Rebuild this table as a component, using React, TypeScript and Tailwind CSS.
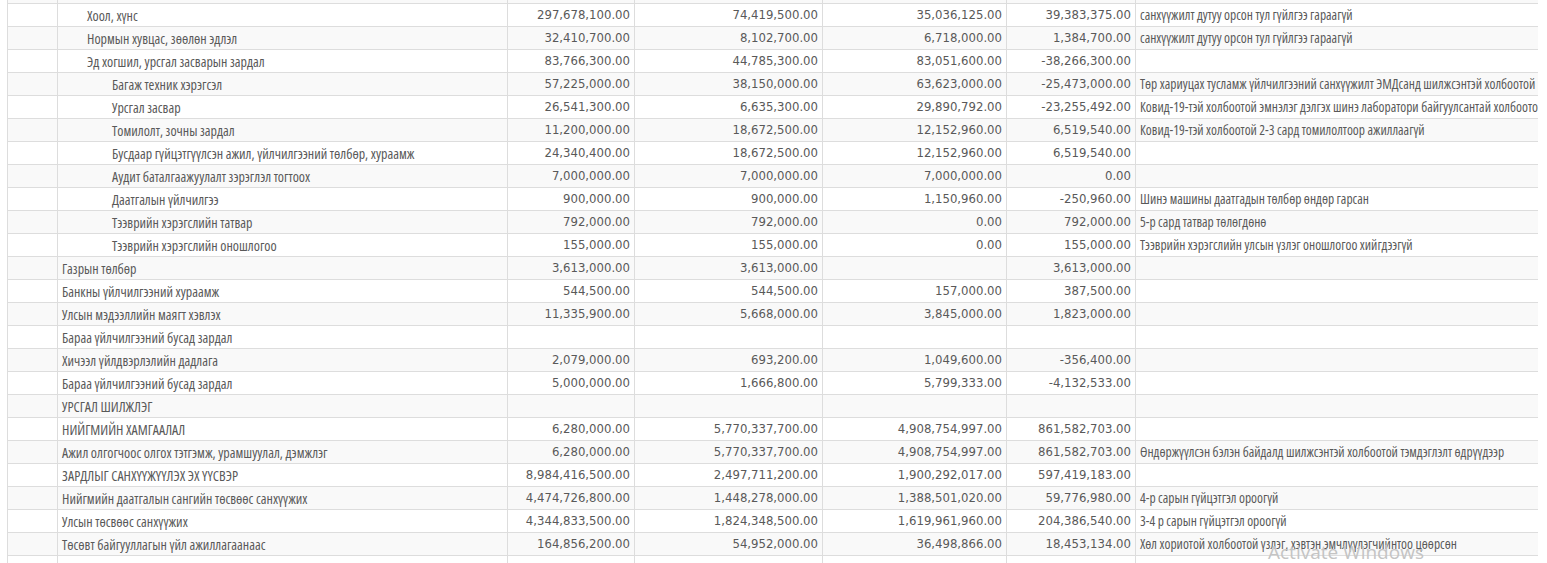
type Row = {
  label: string;
  level?: number;
  plan?: string;
  period?: string;
  actual?: string;
  diff?: string;
  note?: string;
};

const rows: Row[] = [
  { label: "" },
  { label: "Хоол, хүнс", level: 1, plan: "297,678,100.00", period: "74,419,500.00", actual: "35,036,125.00", diff: "39,383,375.00", note: "санхүүжилт дутуу орсон тул гүйлгээ гараагүй" },
  { label: "Нормын хувцас, зөөлөн эдлэл", level: 1, plan: "32,410,700.00", period: "8,102,700.00", actual: "6,718,000.00", diff: "1,384,700.00", note: "санхүүжилт дутуу орсон тул гүйлгээ гараагүй" },
  { label: "Эд хогшил, урсгал засварын зардал", level: 1, plan: "83,766,300.00", period: "44,785,300.00", actual: "83,051,600.00", diff: "-38,266,300.00" },
  { label: "Багаж техник хэрэгсэл", level: 2, plan: "57,225,000.00", period: "38,150,000.00", actual: "63,623,000.00", diff: "-25,473,000.00", note: "Төр хариуцах тусламж үйлчилгээний санхүүжилт ЭМДсанд шилжсэнтэй холбоотой" },
  { label: "Урсгал засвар", level: 2, plan: "26,541,300.00", period: "6,635,300.00", actual: "29,890,792.00", diff: "-23,255,492.00", note: "Ковид-19-тэй холбоотой эмнэлэг дэлгэх шинэ лаборатори байгуулсантай холбоотой" },
  { label: "Томилолт, зочны зардал", level: 2, plan: "11,200,000.00", period: "18,672,500.00", actual: "12,152,960.00", diff: "6,519,540.00", note: "Ковид-19-тэй холбоотой 2-3 сард томилолтоор ажиллаагүй" },
  { label: "Бусдаар гүйцэтгүүлсэн ажил, үйлчилгээний төлбөр, хураамж", level: 2, plan: "24,340,400.00", period: "18,672,500.00", actual: "12,152,960.00", diff: "6,519,540.00" },
  { label: "Аудит баталгаажуулалт зэрэглэл тогтоох", level: 2, plan: "7,000,000.00", period: "7,000,000.00", actual: "7,000,000.00", diff: "0.00" },
  { label: "Даатгалын үйлчилгээ", level: 2, plan: "900,000.00", period: "900,000.00", actual: "1,150,960.00", diff: "-250,960.00", note: "Шинэ машины даатгадын төлбөр өндөр гарсан" },
  { label: "Тээврийн хэрэгслийн татвар", level: 2, plan: "792,000.00", period: "792,000.00", actual: "0.00", diff: "792,000.00", note: "5-р сард татвар төлөгдөнө" },
  { label: "Тээврийн хэрэгслийн оношлогоо", level: 2, plan: "155,000.00", period: "155,000.00", actual: "0.00", diff: "155,000.00", note: "Тээврийн хэрэгслийн улсын үзлэг оношлогоо хийгдээгүй" },
  { label: "Газрын төлбөр", plan: "3,613,000.00", period: "3,613,000.00", diff: "3,613,000.00" },
  { label: "Банкны үйлчилгээний хураамж", plan: "544,500.00", period: "544,500.00", actual: "157,000.00", diff: "387,500.00" },
  { label: "Улсын мэдээллийн маягт хэвлэх", plan: "11,335,900.00", period: "5,668,000.00", actual: "3,845,000.00", diff: "1,823,000.00" },
  { label: "Бараа үйлчилгээний бусад зардал" },
  { label: "Хичээл үйлдвэрлэлийн дадлага", plan: "2,079,000.00", period: "693,200.00", actual: "1,049,600.00", diff: "-356,400.00" },
  { label: "Бараа үйлчилгээний бусад зардал", plan: "5,000,000.00", period: "1,666,800.00", actual: "5,799,333.00", diff: "-4,132,533.00" },
  { label: "УРСГАЛ ШИЛЖЛЭГ" },
  { label: "НИЙГМИЙН ХАМГААЛАЛ", plan: "6,280,000.00", period: "5,770,337,700.00", actual: "4,908,754,997.00", diff: "861,582,703.00" },
  { label: "Ажил олгогчоос олгох тэтгэмж, урамшуулал, дэмжлэг", plan: "6,280,000.00", period: "5,770,337,700.00", actual: "4,908,754,997.00", diff: "861,582,703.00", note: "Өндөржүүлсэн бэлэн байдалд шилжсэнтэй холбоотой тэмдэглэлт өдрүүдээр" },
  { label: "ЗАРДЛЫГ САНХҮҮЖҮҮЛЭХ ЭХ ҮҮСВЭР", plan: "8,984,416,500.00", period: "2,497,711,200.00", actual: "1,900,292,017.00", diff: "597,419,183.00" },
  { label: "Нийгмийн даатгалын сангийн төсвөөс санхүүжих", plan: "4,474,726,800.00", period: "1,448,278,000.00", actual: "1,388,501,020.00", diff: "59,776,980.00", note: "4-р сарын гүйцэтгэл ороогүй" },
  { label: "Улсын төсвөөс санхүүжих", plan: "4,344,833,500.00", period: "1,824,348,500.00", actual: "1,619,961,960.00", diff: "204,386,540.00", note: "3-4 р сарын гүйцэтгэл ороогүй" },
  { label: "Төсөвт байгууллагын үйл ажиллагаанаас", plan: "164,856,200.00", period: "54,952,000.00", actual: "36,498,866.00", diff: "18,453,134.00", note: "Хөл хориотой холбоотой үзлэг, хэвтэн эмчлүүлэгчийнтоо цөөрсөн" },
  { label: "" },
];

const indent = ["pl-1", "pl-[29px]", "pl-[54px]"];

// numbers read wider in the source font, DejaVu condensed digits match them best
const num = "border border-[#dddddd] px-1 py-0 text-right text-[13px] whitespace-nowrap font-stretch-normal font-['DejaVu_Sans_Condensed',sans-serif]";

export default function App() {
  return (
    <div
      className="relative h-[563px] w-[1547px] overflow-hidden bg-white text-[13.5px] text-[#595959] font-stretch-[75%]"
      style={{ fontFamily: '"Open Sans", "DejaVu Sans Condensed", sans-serif' }}
    >
      <div className="ml-[7px] w-[1531px] overflow-hidden">
        <table className="-mt-[20px] w-[1760px] table-fixed border-collapse">
          <colgroup>
            <col className="w-[50px]" />
            <col className="w-[450px]" />
            <col className="w-[127px]" />
            <col className="w-[188px]" />
            <col className="w-[184px]" />
            <col className="w-[129px]" />
            <col className="w-[632px]" />
          </colgroup>
          <tbody>
            {rows.map((r, i) => (
              <tr key={i} className={`h-[23px] ${i % 2 === 0 ? "bg-[#f9f9f9]" : "bg-white"}`}>
                <td className="border border-[#dddddd] p-0" />
                <td className={`border border-[#dddddd] py-0 pr-1 text-[14px] whitespace-nowrap ${indent[r.level ?? 0]}`}>{r.label}</td>
                <td className={num}>{r.plan}</td>
                <td className={num}>{r.period}</td>
                <td className={num}>{r.actual}</td>
                <td className={num}>{r.diff}</td>
                <td className="overflow-hidden border border-[#dddddd] px-1 py-0 whitespace-nowrap">{r.note}</td>
              </tr>
            ))}
          </tbody>
        </table>
      </div>
      {/* windows activation watermark */}
      <div
        className="pointer-events-none absolute left-[1268px] top-[543px] text-[19px] leading-none text-[#c4c4c4] font-stretch-normal"
        style={{ fontFamily: '"Open Sans", "Noto Sans", sans-serif' }}
      >
        Activate Windows
      </div>
    </div>
  );
}
